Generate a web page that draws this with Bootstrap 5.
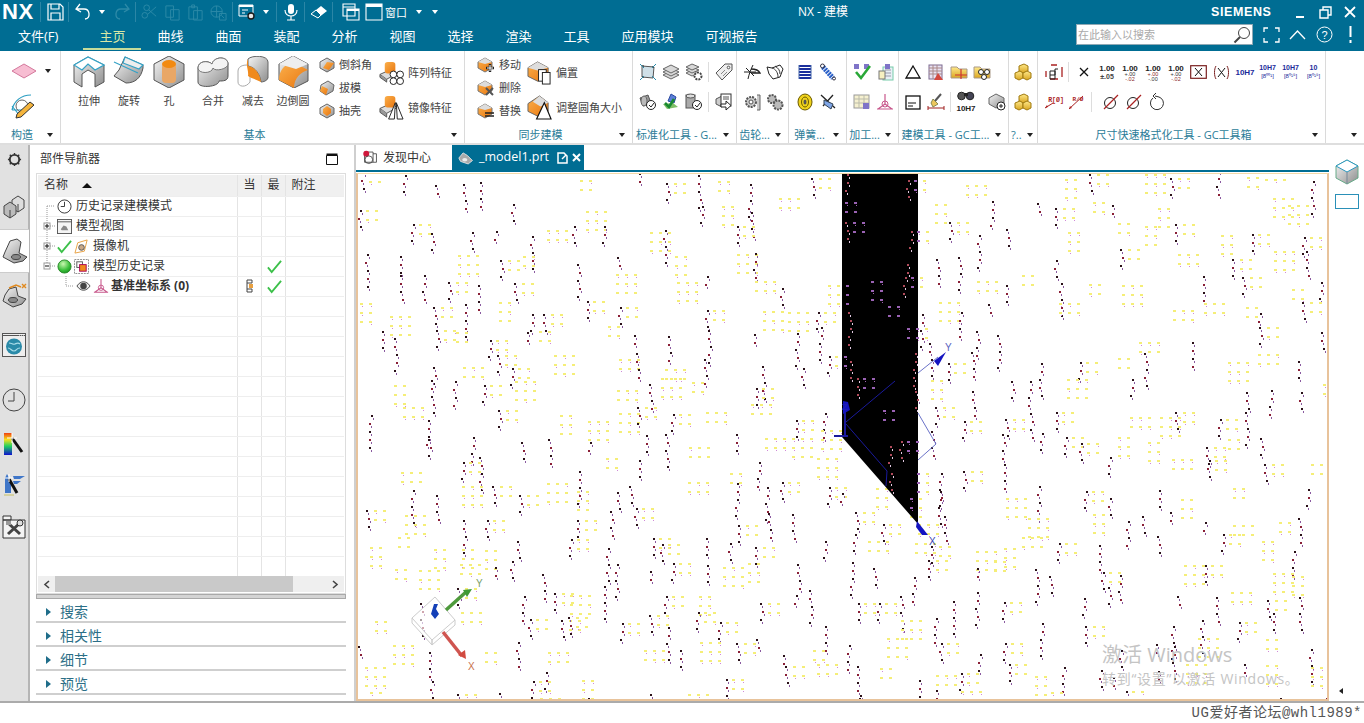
<!DOCTYPE html>
<html lang="zh-CN">
<head>
  <meta charset="UTF-8">
  <meta name="viewport" content="width=device-width, initial-scale=1.0">
  <title>NX - 建模</title>
  <link href="https://cdn.jsdelivr.net/npm/bootstrap@5.3.0/dist/css/bootstrap.min.css" rel="stylesheet">
  <script src="https://cdn.jsdelivr.net/npm/bootstrap@5.3.0/dist/js/bootstrap.bundle.min.js"></script>
  <style>
    html, body { height: 723px; overflow: hidden; }
    body { font-family: "Open Sans", "Noto Sans CJK SC", sans-serif; font-size: 11px; line-height: 1; color: #333; background: #fff; }
    svg { display: block; flex: none; }
    .defs-holder { position: absolute; width: 0; height: 0; }

    /* title + tabs */
    .app-head { background: #006d93; height: 51px; color: #fff; }
    .title-row { height: 24px; }
    .quick-bar { width: 798px; }
    .nx-logo { width: 38px; padding-left: 2px; font: bold 22px "Liberation Sans", sans-serif; letter-spacing: .5px; }
    .qa { width: 23px; height: 22px; }
    .qc { width: 16px; height: 22px; }
    .qs { width: 1px; height: 20px; margin: 0 2px; background: #2b86a6; }
    .qa-gap { margin-left: 4px; }
    .win-label { width: 22px; font-size: 11px; }
    .app-title { font-size: 12px; }
    .siemens { font: bold 12.5px "Liberation Sans", sans-serif; letter-spacing: .6px; margin-left: 363px; }
    .win-btn { width: 25px; height: 20px; }
    .win-first { margin-left: 16px; }
    .tab-row { height: 27px; }
    .rb-tab { padding: 0 16px; font-size: 13px; height: 25px; line-height: 23px; white-space: nowrap; }
    .rb-tab.file-tab { padding: 0 25px 0 18px; }
    .rb-tab.on { color: #d9e8a6; border-bottom: 2px solid #c5dc9a; }
    .find-box { width: 177px; height: 21px; background: #fff; border: 1px solid #8fa9b5; color: #aaa; font-size: 11px; padding: 0 1px 0 1px; margin-top: -6px; }
    .tab-tools { margin-top: -6px; margin-left: 5px; }
    .tool-btn { width: 26.5px; height: 20px; }

    /* ribbon */
    .ribbon { height: 94px; border-bottom: 2px solid #dedede; }
    .rgrp { height: 92px; border-right: 1px solid #dadada; position: relative; }
    .g-a { width: 61px; } .g-b { width: 404px; } .g-c { width: 168px; } .g-d { width: 104px; }
    .g-e { width: 52px; } .g-f { width: 58px; } .g-g { width: 52px; } .g-h { width: 110px; }
    .g-i { width: 29px; } .g-j { width: 288px; } .g-k { width: 38px; border-right: 0; }
    .rbody { height: 75px; }
    .rlabel { height: 17px; color: #2b7c98; font-size: 11px; padding: 0 7px 0 2px; white-space: nowrap; }
    .rlabel b { font-weight: 400; flex: 1; text-align: center; padding-right: 5px; }
    .caret-d { width: 0; height: 0; border: 3.5px solid transparent; border-top: 4px solid #222; border-bottom: 0; flex: none; }
    .caret-w { width: 0; height: 0; border: 3.5px solid transparent; border-top: 4px solid #fff; border-bottom: 0; }
    .plane-row { padding-top: 12px; padding-left: 3px; }
    .sketch-icon { margin: 14px 0 0 9px; }
    .big-item { width: 40px; padding-top: 5px; color: #444; }
    .big-item span { margin-top: 7px; white-space: nowrap; }
    .small-col { padding-top: 2px; }
    .small-col-a { margin-left: 2px; padding-left: 4px; }
    .small-row { height: 23px; gap: 4px; color: #444; white-space: nowrap; }
    .mid-row { height: 35px; gap: 4px; color: #444; white-space: nowrap; }
    .mid-col-a { margin-left: 7px; padding-top: 4px; }
    .mid-col-b { margin-left: 6px; padding-top: 4px; }
    .icon-cell { width: 23px; height: 24px; }
    .icon-sep { width: 1px; height: 20px; background: #ddd; margin: 0 3px; }
    .icon-rows { padding-top: 9px; gap: 6px; }
    .pad-a { padding-left: 5px; } .pad-b { padding-left: 8px; } .pad-c { padding-left: 3px; }
    .pad-d { padding-left: 2px; } .pad-e { padding-left: 4px; } .pad-f { padding-left: 3px; }

    /* work area */
    .work-area { height: 556px; }
    .side-rail { width: 30px; background: #e1e1e1; border-right: 2px solid #b5b5b5; position: relative; }
    .rail-btn { height: 44px; }
    .rail-btn.on { background: #fff; width: 30px; border: 1px solid #ccc; border-right: 0; }
    .rail-a { height: 40px; padding-bottom: 12px; } .rail-b { height: 55px; } .rail-c { height: 33px; }
    .rail-d { height: 50px; } .rail-e { height: 34px; }
    .nav-panel { width: 326px; border-right: 2px solid #cfcfcf; padding: 0 8px 0 6px; }
    .panel-title { height: 28px; font-size: 12px; padding: 0 8px 0 4px; }
    .tree-box { height: 421px; border: 1px solid #ddd; padding: 1px; }
    .tree-table { table-layout: fixed; width: 306px; margin: 0; font-size: 12px; --bs-table-bg: transparent; }
    .tree-table th, .tree-table td { height: 20px; padding: 0 0 0 2px; border: 0; border-bottom: 1px solid #eee; border-right: 1px solid #e4e4e4; font-weight: 400; vertical-align: middle; color: #333; line-height: 1; }
    .tree-table td:first-child { border-right: 1px solid #e4e4e4; }
    .tree-table td:last-child, .tree-table th:last-child { border-right: 0; }
    .tree-table th { background: #f0f0f0; height: 21px; padding-left: 6px; }
    .tree-head-sort { width: 0; height: 0; border: 5px solid transparent; border-bottom: 5px solid #111; border-top: 0; margin-left: 14px; }
    .tree-cell { height: 19px; gap: 2px; white-space: nowrap; }
    .tree-cell span { margin-left: 2px; }
    .tree-scroll-wrap { height: 401px; overflow: hidden; }
    .h-scroll { height: 16px; background: #efefef; }
    .h-end { width: 17px; height: 16px; color: #555; }
    .h-thumb { width: 238px; height: 16px; background: #c9c9c9; }
    .split-bar { height: 5px; background: #d4d4d4; border: 1px solid #a9a9a9; }
    .fold-row { height: 24px; border-bottom: 2px solid #cfcfcf; color: #2c6f87; font-size: 14px; gap: 9px; padding: 3px 0 0 10px; }
    .fold-tri { width: 0; height: 0; border: 4px solid transparent; border-left: 5px solid #1f6d8a; border-right: 0; }

    /* view */
    .view-col { width: 973px; }
    .doc-tabs { height: 25px; }
    .doc-tab { height: 25px; font-size: 12px; gap: 4px; padding-left: 6px; }
    .doc-home { width: 96px; }
    .doc-model { width: 132px; background: #006d93; color: #fff; font-size: 12.5px; }
    .teal-rule { height: 3px; background: #006d93; border-bottom: 1px solid #fff; }
    .scene-wrap { height: 528px; border: 2px solid #e8c39b; border-top: 1px solid #f3d9a8; position: relative; overflow: hidden; }
    .activate { position: absolute; left: 744px; top: 471px; color: #c4c4c4; white-space: nowrap; pointer-events: none; }
    .activate-a { font-size: 20px; }
    .activate-b { font-size: 14px; margin-top: 7px; letter-spacing: .7px; }
    .right-strip { flex: 1; padding: 0 6px 0 6px; position: relative; }
    .strip-cube { margin-top: 14px; }
    .strip-rect { width: 24px; height: 15px; border: 1px solid #2a90b8; margin-top: 9px; }
    .strip-tri { margin: auto 0 7px 4px; width: 0; height: 0; border: 3px solid transparent; border-right: 4px solid #222; border-left: 0; }
    .foot-bar { height: 22px; border-top: 2px solid #ababab; color: #555; font-size: 14px; letter-spacing: .5px; padding-right: 2px; font-family: "Liberation Mono", "Noto Sans CJK SC", monospace; }
  </style>
</head>
<body>
<svg class="defs-holder" xmlns="http://www.w3.org/2000/svg">
  <defs>
    <linearGradient id="gr" x1="0" y1="0" x2="1" y2="1"><stop offset="0" stop-color="#f6f6f6"/><stop offset="1" stop-color="#8d8d8d"/></linearGradient>
    <linearGradient id="or" x1="0" y1="0" x2="1" y2="1"><stop offset="0" stop-color="#fbb04c"/><stop offset="1" stop-color="#e8760f"/></linearGradient>
    <linearGradient id="gy" x1="0" y1="0" x2="0" y2="1"><stop offset="0" stop-color="#ffe98a"/><stop offset="1" stop-color="#d9a520"/></linearGradient>
    <radialGradient id="ball" cx=".4" cy=".3" r=".8"><stop offset="0" stop-color="#c9f7b0"/><stop offset=".6" stop-color="#3cc03c"/><stop offset="1" stop-color="#138a1d"/></radialGradient>
    <linearGradient id="rainbow" x1="0" y1="0" x2="0" y2="1"><stop offset="0" stop-color="#f04010"/><stop offset=".3" stop-color="#f5e020"/><stop offset=".6" stop-color="#20d060"/><stop offset="1" stop-color="#1010d0"/></linearGradient>

    <!-- ribbon, big -->
    <symbol id="i-plane" viewBox="0 0 26 16"><polygon points="1,8 13,1 25,8 13,15" fill="#f7bdd2" stroke="#d4789c"/></symbol>
    <symbol id="i-sketch" viewBox="0 0 26 26"><path d="M3 17 C5 8 12 2 22 2M3 13l8 10M3 17h10" fill="none" stroke="#2b9ec2" stroke-width="1.2"/><circle cx="13" cy="13" r="6" fill="none" stroke="#666"/><polygon points="21,9 25,12 12,24 7,25 8,21" fill="#f4b43c" stroke="#333"/></symbol>
    <symbol id="i-extrude" viewBox="0 0 32 32"><polygon points="1,9 15,1 31,9 31,26 22,31 22,18 15,14 9,18 9,31 1,26" fill="url(#gr)" stroke="#555"/><polygon points="1,9 15,1 31,9 22,14 15,8 9,14" fill="#fff" stroke="#34a2c6" stroke-width="1.2"/></symbol>
    <symbol id="i-revolve" viewBox="0 0 32 32"><path d="M1 20 L13 27 C22 27 28 22 30 12 L30 9 L12 1 L6 14 Z" fill="url(#gr)" stroke="#555"/><path d="M12 1 L30 9 L26 13 L10 7Z M1 6 L25 17" fill="#eee" stroke="#34a2c6" stroke-width="1.2"/></symbol>
    <symbol id="i-hole" viewBox="0 0 32 32"><polygon points="1,8 16,0 31,8 31,24 16,32 1,24" fill="url(#gr)" stroke="#555"/><rect x="9" y="7" width="14" height="20" rx="4" fill="#e9a766"/><ellipse cx="16" cy="8" rx="7" ry="4" fill="#f28a12"/></symbol>
    <symbol id="i-unite" viewBox="0 0 32 32"><path d="M1 12 C1 5 11 4 15 8 C17 0 31 0 31 8 L31 20 C31 25 26 25 22 25 C22 31 1 33 1 26Z" fill="url(#gr)" stroke="#555"/><path d="M1 12 C1 18 15 18 16 12 C18 16 31 13 31 8 C31 0 17 0 15 8 C11 4 1 5 1 12Z" fill="#f4f4f4" stroke="#777"/></symbol>
    <symbol id="i-subtract" viewBox="0 0 32 32"><path d="M1 15 C1 9 10 8 13 10 L13 26 C9 32 1 31 1 26Z" fill="#fff" stroke="#aaa"/><path d="M11 3 C15 -1 31 -1 31 6 L31 22 C30 25 26 26 24 26 C23 18 18 11 11 10Z" fill="url(#gr)" stroke="#666"/><path d="M11 3 L11 10 C18 11 23 18 24 26 C20 24 14 22 11 20 C12 14 8 10 11 3Z" fill="#f08a1c"/></symbol>
    <symbol id="i-blend" viewBox="0 0 32 32"><polygon points="2,8 16,0 31,8 31,25 17,32 2,24" fill="url(#gr)" stroke="#555"/><path d="M2 24 C2 14 8 8 16 6 L31 14 C24 16 17 22 17 32Z" fill="url(#or)"/><polygon points="2,8 16,0 31,8 19,13" fill="#eee"/></symbol>
    <symbol id="i-cham" viewBox="0 0 16 16"><polygon points="1,5 8,1 15,5 15,11 8,15 1,11" fill="url(#gr)" stroke="#666"/><polygon points="4,11 8,5 15,6 10,13" fill="url(#or)"/></symbol>
    <symbol id="i-draft" viewBox="0 0 16 16"><polygon points="2,5 9,1 15,5 14,11 7,15 1,11" fill="url(#gr)" stroke="#666"/><polygon points="1,11 3,6 9,9 7,15" fill="url(#or)"/></symbol>
    <symbol id="i-shell" viewBox="0 0 16 16"><polygon points="1,5 8,1 15,5 15,11 8,15 1,11" fill="url(#gr)" stroke="#666"/><polygon points="4,6 8,3 12,6 12,10 8,13 4,10" fill="url(#or)"/></symbol>
    <symbol id="i-pattern" viewBox="0 0 26 26"><polygon points="1,15 12,10 19,14 8,20" fill="#ddd" stroke="#555"/><path d="M1 15v3l7 5v-3" fill="#999" stroke="#555"/><rect x="6" y="2" width="11" height="12" rx="3" fill="url(#or)"/><g fill="#fff" stroke="#222"><circle cx="15" cy="15" r="3.5"/><circle cx="22" cy="15" r="3.5"/><circle cx="15" cy="22" r="3.5"/><circle cx="22" cy="22" r="3.5"/></g></symbol>
    <symbol id="i-mirror" viewBox="0 0 26 26"><polygon points="1,14 12,9 19,13 8,19" fill="#ddd" stroke="#555"/><path d="M1 14v4l7 5v-4" fill="#999" stroke="#555"/><rect x="6" y="1" width="11" height="12" rx="3" fill="url(#or)"/><path d="M17 8 L10 25 H16ZM18 8 L25 25 H19Z" fill="#fff" stroke="#222"/></symbol>
    <symbol id="i-move" viewBox="0 0 18 18"><polygon points="1,6 8,2 15,6 15,12 8,16 1,12" fill="url(#or)" stroke="#777"/><polygon points="1,6 8,2 15,6 8,8" fill="#ddd"/><path d="M13 8v8M9 12h8" stroke="#222" stroke-width="2.4"/><path d="M13 9v6M10 12h6" stroke="#fff"/></symbol>
    <symbol id="i-del" viewBox="0 0 18 18"><polygon points="1,6 8,2 15,6 15,12 8,16 1,12" fill="url(#or)" stroke="#777"/><polygon points="1,6 8,2 15,6 8,8" fill="#ddd"/><path d="M9 9l7 7M16 9l-7 7" stroke="#555" stroke-width="2"/></symbol>
    <symbol id="i-swap" viewBox="0 0 18 18"><polygon points="1,6 8,2 15,6 15,12 8,16 1,12" fill="url(#or)" stroke="#777"/><polygon points="1,6 8,2 15,6 8,8" fill="#ddd"/><path d="M8 11h9M8 14h9" stroke="#222" stroke-width="1.4"/></symbol>
    <symbol id="i-offset" viewBox="0 0 26 26"><polygon points="1,8 11,2 22,8 22,17 11,22 1,17" fill="url(#or)" stroke="#666"/><polygon points="1,8 11,2 22,8 11,11" fill="#ddd"/><rect x="12" y="10" width="8" height="12" fill="#fff" stroke="#222"/><rect x="16" y="13" width="8" height="12" fill="#fff" stroke="#222"/></symbol>
    <symbol id="i-resize" viewBox="0 0 26 26"><polygon points="1,9 13,1 22,8 22,17 11,22 1,17" fill="url(#or)" stroke="#666"/><polygon points="6,7 13,1 22,8 14,12" fill="#ddd"/><path d="M18 8 L10 25 H25Z" fill="#fff" stroke="#111" stroke-width="1.2"/></symbol>

    <!-- ribbon, tool cells -->
    <symbol id="t-surf" viewBox="0 0 18 18"><path d="M3 3 L15 4 L14 15 L3 14Z" fill="#cfe0e8" stroke="#555"/><path d="M3 3h2M13 4h2M3 14h2" stroke="#222"/><path d="M1 1l4 4M17 1l-4 4M1 17l4-4M17 17l-4-4" stroke="#2b8aa8"/></symbol>
    <symbol id="t-layers" viewBox="0 0 18 18"><g fill="#d8d8d8" stroke="#666"><polygon points="1,12 9,8 17,12 9,16"/><polygon points="1,9 9,5 17,9 9,13"/><polygon points="1,6 9,2 17,6 9,10"/></g></symbol>
    <symbol id="t-layer2" viewBox="0 0 18 18"><g fill="#d8d8d8" stroke="#666"><polygon points="1,10 7,7 14,10 7,13"/><polygon points="1,7 7,4 14,7 7,10"/><polygon points="1,4 7,1 14,4 7,7"/></g><circle cx="13" cy="13" r="3.5" fill="#fff" stroke="#444" stroke-width="2" stroke-dasharray="2 1"/></symbol>
    <symbol id="t-tag" viewBox="0 0 18 18"><path d="M10 1 L17 1 L17 7 L7 17 L1 10Z" fill="#eee" stroke="#555"/><circle cx="13.5" cy="4.5" r="1.3" fill="#fff" stroke="#555"/><path d="M6 11l4-4M8 13l4-4" stroke="#888"/></symbol>
    <symbol id="t-check1" viewBox="0 0 18 18"><path d="M1 5 L9 2 L12 10 L4 13Z" fill="#999" stroke="#555"/><ellipse cx="5" cy="8" rx="3" ry="5" fill="#bbb" stroke="#666"/><circle cx="12" cy="12" r="4.5" fill="#fff" stroke="#222"/><path d="M10 12l2 2 3-4" fill="none" stroke="#222"/></symbol>
    <symbol id="t-check2" viewBox="0 0 18 18"><path d="M9 1l5 3-2 6-6-2z" fill="#5a7ed8" stroke="#2c4aa0"/><path d="M1 11l4 5 11-2-5-4z" fill="#7fbe68"/><path d="M3 10l4 4 5-8" fill="none" stroke="#1a8a30" stroke-width="2.6"/></symbol>
    <symbol id="t-check3" viewBox="0 0 18 18"><rect x="1" y="2" width="9" height="13" fill="#aaa" stroke="#555"/><ellipse cx="5.5" cy="3" rx="4.500" ry="2" fill="#ddd" stroke="#555"/><circle cx="12" cy="12" r="4.5" fill="#fff" stroke="#222"/><path d="M10 12l2 2 3-4" fill="none" stroke="#222"/></symbol>
    <symbol id="t-export" viewBox="0 0 18 18"><polygon points="1,6 7,3 7,14 1,11" fill="#ccc" stroke="#555"/><rect x="6" y="1" width="10" height="12" fill="#fff" stroke="#333"/><path d="M8 4h6M8 6h6" stroke="#555"/><path d="M6 11h5V8l5 4.500-5 4.500v-3H6z" fill="#fff" stroke="#222"/></symbol>
    <symbol id="t-gear1" viewBox="0 0 18 18"><path d="M1 9h12M3 5l8 8M10 2 C8 6 6 11 5 16" stroke="#222" fill="none"/><path d="M8 6c3 0 7 0 9 4l-9 0" fill="none" stroke="#222" stroke-width="1.4"/></symbol>
    <symbol id="t-gear2" viewBox="0 0 18 18"><path d="M1 4l5 1 8-3 3 4-3 8-7 2-4-5z" fill="#fff" stroke="#222"/><path d="M6 5c4 1 6 5 6 9M9 3c3 2 5 4 5 8" fill="none" stroke="#333"/></symbol>
    <symbol id="t-gear3" viewBox="0 0 18 18"><circle cx="8" cy="9" r="5" fill="#ccc" stroke="#555" stroke-width="2" stroke-dasharray="2 1"/><circle cx="8" cy="9" r="2" fill="#fff" stroke="#555"/><path d="M14 2h3v15h-3" fill="#ccc" stroke="#666"/></symbol>
    <symbol id="t-gear4" viewBox="0 0 18 18"><circle cx="6" cy="6" r="4" fill="#bbb" stroke="#555" stroke-width="2" stroke-dasharray="2 1"/><circle cx="12" cy="12" r="4.500" fill="#bbb" stroke="#555" stroke-width="2" stroke-dasharray="2 1"/></symbol>
    <symbol id="t-spring1" viewBox="0 0 18 18"><g stroke="#1c2f9c" stroke-width="1.8"><path d="M3 3h12M3 6h12M3 9h12M3 12h12M3 15h12"/></g><path d="M3 2v14M15 2v14" stroke="#46a" /></symbol>
    <symbol id="t-spring2" viewBox="0 0 18 18"><path d="M4 4 L14 15" stroke="#2a60c8" stroke-width="5" stroke-dasharray="2 .8"/><circle cx="3.500" cy="3" r="2" fill="none" stroke="#334"/><circle cx="15" cy="15.500" r="1.500" fill="none" stroke="#334"/></symbol>
    <symbol id="t-spring3" viewBox="0 0 18 18"><ellipse cx="9" cy="9" rx="7" ry="8" fill="#efd21c" stroke="#6b5a00"/><ellipse cx="9" cy="9" rx="3.500" ry="5" fill="none" stroke="#6b5a00"/><ellipse cx="9" cy="9" rx="1.500" ry="2.500" fill="#555"/></symbol>
    <symbol id="t-spring4" viewBox="0 0 18 18"><path d="M2 2 L16 15M14 2 L4 13" stroke="#222" stroke-width="1.300"/><path d="M5 7l9 4-2 5-7-5z" fill="#7fa6e8" stroke="#345"/></symbol>
    <symbol id="t-mach1" viewBox="0 0 18 18"><rect x="1" y="1" width="5" height="5" fill="#7f74c8"/><rect x="11" y="1" width="5" height="5" fill="#7f74c8"/><path d="M3 9l5 6 9-12" fill="none" stroke="#2aa838" stroke-width="2.6"/></symbol>
    <symbol id="t-mach2" viewBox="0 0 18 18"><rect x="7" y="4" width="10" height="13" fill="#e8eff5" stroke="#7ca"/><path d="M9 7h6M9 10h6M9 13h6" stroke="#99a"/><rect x="3" y="8" width="6" height="8" fill="#f6f0c0" stroke="#777"/><rect x="9" y="1" width="5" height="5" fill="#7f74c8"/></symbol>
    <symbol id="t-mach3" viewBox="0 0 18 18"><rect x="1" y="2" width="15" height="13" fill="#f5f0cf" stroke="#999"/><path d="M1 6h15M1 10h15M6 2v13M11 2v13" stroke="#bba"/><rect x="10" y="10" width="6" height="6" fill="#7f74c8"/></symbol>
    <symbol id="t-datum" viewBox="0 0 18 18"><circle cx="9" cy="11" r="3" fill="none" stroke="#c8588c"/><path d="M9 1v10M9 11L2 16M9 11l7 5M1 16h16" fill="none" stroke="#c8588c" stroke-width="1.200"/></symbol>
    <symbol id="t-tri" viewBox="0 0 18 18"><path d="M9 3 L16 15 H2Z" fill="#fff" stroke="#111" stroke-width="1.300"/></symbol>
    <symbol id="t-sheet" viewBox="0 0 18 18"><rect x="2" y="3" width="14" height="13" fill="#fff" stroke="#111" stroke-width="1.300"/><path d="M4 10h8M4 13h5" stroke="#111"/></symbol>
    <symbol id="t-table" viewBox="0 0 18 18"><rect x="2" y="2" width="13" height="14" fill="#e8e2f2" stroke="#7d6a90"/><path d="M2 5h13M2 8h13M2 11h13M6 2v14M10 2v14" stroke="#a88"/><path d="M11 10l5 7H7z" fill="#d4483e"/></symbol>
    <symbol id="t-broom" viewBox="0 0 18 18"><path d="M14 1L8 8" stroke="#555" stroke-width="2"/><path d="M6 6l5 5-5 3-2-4z" fill="#edc65c" stroke="#885"/><path d="M1 13v4M17 13v4M1 15h16" stroke="#a02020"/></symbol>
    <symbol id="t-f1" viewBox="0 0 18 18"><path d="M1 4h6l2 2h8v9H1z" fill="url(#gy)" stroke="#a98"/><path d="M5 12h12M11 6v10" stroke="#c33" stroke-width="1.200"/></symbol>
    <symbol id="t-f2" viewBox="0 0 18 18"><path d="M1 4h6l2 2h8v9H1z" fill="url(#gy)" stroke="#a98"/><circle cx="8" cy="9" r="2.500" fill="#fff" stroke="#222"/><circle cx="14" cy="9" r="2.500" fill="#fff" stroke="#222"/><circle cx="11" cy="14" r="2.500" fill="#fff" stroke="#222"/></symbol>
    <symbol id="t-binoc" viewBox="0 0 18 10"><circle cx="4.500" cy="5" r="3.800" fill="#555" stroke="#222"/><circle cx="13" cy="5" r="3.800" fill="#445" stroke="#222"/><rect x="7" y="2" width="4" height="3" fill="#222"/></symbol>
    <symbol id="t-boxp" viewBox="0 0 18 18"><polygon points="1,5 8,1 16,5 16,11 8,15 1,11" fill="url(#gr)" stroke="#666"/><circle cx="13" cy="13" r="4" fill="#fff" stroke="#222"/><path d="M13 11v4M11 13h4" stroke="#222"/></symbol>
    <symbol id="t-gold" viewBox="0 0 18 18"><g fill="url(#gy)" stroke="#a07a10"><polygon points="5,3 10,1 14,3 14,8 9,10 5,8"/><polygon points="1,10 6,8 9,10 9,15 5,17 1,15"/><polygon points="9,10 13,8 17,10 17,15 13,17 9,15"/></g></symbol>
    <symbol id="t-step" viewBox="0 0 18 18"><path d="M5 12h5V6h3" fill="none" stroke="#222"/><path d="M1 8v6M17 4v10M5 16h8M6 2h6" stroke="#a22" stroke-width="1.300"/><path d="M5 8h5v8H5z" fill="none" stroke="#222"/></symbol>
    <symbol id="t-dia1" viewBox="0 0 18 18"><circle cx="8" cy="10" r="5.500" fill="none" stroke="#222"/><path d="M2 16L16 2" stroke="#a22" stroke-width="1.300"/></symbol>
    <symbol id="t-rot" viewBox="0 0 18 18"><path d="M5 5 A6.500 6.500 0 1 0 11 4 L7 3M8 0L5 3 8 6" fill="none" stroke="#333"/></symbol>
    <symbol id="t-lead1" viewBox="0 0 18 18"><path d="M1 15L9 10" stroke="#a22"/><path d="M1 15l3-1-1-2z" fill="#a22"/></symbol>
    <symbol id="t-lead2" viewBox="0 0 18 18"><path d="M2 16L16 3" stroke="#a22"/><path d="M2 16l3-1-2-2z" fill="#a22"/></symbol>

    <!-- quick bar -->
    <symbol id="q-save" viewBox="0 0 18 18"><path d="M2 1h12l3 3v13H2z M5 1v5h8V1 M5 17v-7h9v7" fill="none" stroke="#fff" stroke-width="1.200"/></symbol>
    <symbol id="q-undo" viewBox="0 0 18 18"><path d="M6 1L2 6l5 3M2 6h8c6 0 7 9 1 10" fill="none" stroke="#fff" stroke-width="1.300"/></symbol>
    <symbol id="q-redo" viewBox="0 0 18 18"><path d="M12 1l4 5-5 3M16 6H8c-6 0-7 9-1 10" fill="none" stroke="#2d8aa8" stroke-width="1.300"/></symbol>
    <symbol id="q-cut" viewBox="0 0 18 18"><g fill="none" stroke="#2d8aa8"><circle cx="4" cy="12" r="3"/><circle cx="6" cy="4" r="3"/><path d="M7 11L16 3M8 6l8 7"/></g></symbol>
    <symbol id="q-copy" viewBox="0 0 18 18"><g fill="none" stroke="#2d8aa8"><path d="M2 2h8v12H2zM7 6h9v11H7z"/></g></symbol>
    <symbol id="q-paste" viewBox="0 0 18 18"><g fill="none" stroke="#2d8aa8"><path d="M2 3h9v13H2zM5 1h3v3H5zM7 7h9v10H7z"/></g></symbol>
    <symbol id="q-glob" viewBox="0 0 18 18"><g fill="none" stroke="#2d8aa8"><circle cx="7" cy="8" r="6"/><path d="M1 8h12M7 2v12M10 10h7v7h-7zM12 12l3 3"/></g></symbol>
    <symbol id="q-winset" viewBox="0 0 18 18"><path d="M1 2h14v11H1z" fill="none" stroke="#fff"/><path d="M1 2h14v2H1z" fill="#fff"/><path d="M4 7h6M4 10h3" stroke="#fff"/><circle cx="13" cy="13" r="3" fill="#e8e8e8" stroke="#1a1a1a" stroke-width="1.400"/></symbol>
    <symbol id="q-mic" viewBox="0 0 18 18"><rect x="6" y="1" width="6" height="10" rx="3" fill="#fff"/><path d="M3 7c0 8 12 8 12 0M9 13v4M5 17h8" fill="none" stroke="#fff" stroke-width="1.200"/></symbol>
    <symbol id="q-erase" viewBox="0 0 18 18"><polygon points="1,11 11,3 17,8 8,15" fill="#fff"/><polygon points="1,11 6,7 11,12 8,15" fill="#006d93" stroke="#fff"/></symbol>
    <symbol id="q-win1" viewBox="0 0 18 18"><path d="M1 1h12v3H1zM1 4h12v9H1zM5 6h12v11H5z" fill="#006d93" stroke="#fff" stroke-width="1.100"/><path d="M5 6h12v2H5z" fill="#fff"/></symbol>
    <symbol id="q-win2" viewBox="0 0 18 18"><path d="M1 1h16v16H1z" fill="none" stroke="#fff" stroke-width="1.100"/><path d="M1 1h16v3H1z" fill="#fff"/></symbol>
    <symbol id="q-mag" viewBox="0 0 18 18"><circle cx="11" cy="7" r="5.500" fill="#fff" stroke="#444"/><path d="M7 11L1.500 16.500" stroke="#444" stroke-width="2"/></symbol>

    <!-- rail + tree -->
    <symbol id="r-gear" viewBox="0 0 16 16"><circle cx="8" cy="8" r="5" fill="none" stroke="#333" stroke-width="2"/><path d="M8 1v2M8 13v2M1 8h2M13 8h2M3 3l1.500 1.500M13 3l-1.500 1.500M3 13l1.500-1.500M13 13l-1.500-1.500" stroke="#333" stroke-width="1.500"/></symbol>
    <symbol id="r-blocks" viewBox="0 0 22 24"><polygon points="9,5 15,1 21,5 21,13 15,17 9,13" fill="#ddd" stroke="#444"/><polygon points="1,11 7,7 13,11 13,19 7,23 1,19" fill="#bbb" stroke="#444"/><path d="M15 9v8M7 15v8" stroke="#444"/></symbol>
    <symbol id="r-bracket" viewBox="0 0 26 26"><path d="M8 3l7-2 4 3-2 11 8 4-4 4-9 2-11-6 2-5z" fill="url(#gr)" stroke="#444"/><ellipse cx="14" cy="19" rx="4.500" ry="2.500" fill="#888" stroke="#444"/></symbol>
    <symbol id="r-bracket2" viewBox="0 0 26 26"><path d="M8 7l7-2 2 9 8 3-4 5-9 3-10-6 2-6z" fill="url(#gr)" stroke="#444"/><ellipse cx="12" cy="18" rx="4.500" ry="2.500" fill="#888" stroke="#444"/><path d="M8 6l7-3 5 2M21 2l4 4M25 2l-4 4" fill="none" stroke="#e08a20" stroke-width="1.400"/></symbol>
    <symbol id="r-globe" viewBox="0 0 24 24"><rect x=".5" y=".5" width="23" height="23" fill="#eee" stroke="#555"/><path d="M1 2.500h22" stroke="#555"/><path d="M17 2h1M19 2h1M21 2h1" stroke="#fff"/><circle cx="12" cy="13.500" r="8" fill="#2a8aa8"/><path d="M7 10c3 0 4 2 6 1s3-2 5 0M6 15c3 0 3 3 6 3s2-3 6-3" fill="none" stroke="#a8dce8" stroke-width="1.200"/></symbol>
    <symbol id="r-clock" viewBox="0 0 24 24"><circle cx="12" cy="12" r="11" fill="none" stroke="#444"/><path d="M12 4v9H6" fill="none" stroke="#444"/></symbol>
    <symbol id="r-color" viewBox="0 0 22 24"><rect x="1" y="1" width="8" height="22" fill="url(#rainbow)"/><path d="M9 6l10 14" stroke="#111" stroke-width="3"/><path d="M9 1v10M4 6h10" stroke="#fff"/></symbol>
    <symbol id="r-mill" viewBox="0 0 24 24"><path d="M3 20V5l2-4 4 7v12zM11 3h12l-5 3h-6zM11 8h8l-4 3h-3z" fill="#3f76c8"/><path d="M2 22h10" stroke="#c8c060"/><path d="M7 6l8 14" stroke="#111" stroke-width="3"/><path d="M7 1v8M3 5h8" stroke="#fff"/></symbol>
    <symbol id="r-tools" viewBox="0 0 24 24"><path d="M1 5h8V1H1v4h22v18H1z" fill="#f4f4f4" stroke="#333"/><path d="M6 19L18 8M18 19L6 8" stroke="#444" stroke-width="3"/><circle cx="18" cy="8" r="3" fill="#ddd" stroke="#333"/><rect x="4" y="6" width="5" height="4" fill="#999"/></symbol>
    <symbol id="n-clock" viewBox="0 0 16 16"><circle cx="8" cy="8" r="7" fill="#fff" stroke="#333"/><path d="M8 3v5H4" fill="none" stroke="#333"/></symbol>
    <symbol id="n-view" viewBox="0 0 16 16"><rect x=".5" y=".5" width="15" height="15" fill="#f4f4f4" stroke="#555"/><path d="M.5 3h15" stroke="#555"/><path d="M4 11l3-4 3 1 2 4H5z" fill="#888"/></symbol>
    <symbol id="n-check" viewBox="0 0 16 16"><path d="M1 9l4 5L15 2" fill="none" stroke="#3cc04a" stroke-width="2"/></symbol>
    <symbol id="n-cam" viewBox="0 0 16 16"><path d="M4 4l10-3-3 12-10 2z" fill="none" stroke="#e8a040"/><circle cx="8" cy="9" r="3" fill="#c8a888" stroke="#555"/></symbol>
    <symbol id="n-ball" viewBox="0 0 16 16"><circle cx="8" cy="8" r="7" fill="url(#ball)" stroke="#2a8a2a"/></symbol>
    <symbol id="n-group" viewBox="0 0 16 16"><rect x=".5" y=".5" width="15" height="15" fill="#fff" stroke="#888" stroke-dasharray="2 1"/><rect x="3" y="3" width="6" height="6" fill="#fff" stroke="#555"/><rect x="6" y="6" width="7" height="7" fill="#f08a1c" stroke="#a05"/></symbol>
    <symbol id="n-eye" viewBox="0 0 16 12"><path d="M1 6c4-6 10-6 14 0c-4 6-10 6-14 0z" fill="#eee" stroke="#444"/><circle cx="8" cy="6" r="3.500" fill="#444"/></symbol>
    <symbol id="n-dep" viewBox="0 0 8 14"><path d="M1 1h5v3H1zM1 10h5v3H1zM1 4v6" fill="none" stroke="#444"/><rect x="3" y="5" width="4" height="4" fill="#e8a040"/></symbol>
    <symbol id="d-find" viewBox="0 0 20 18"><path d="M3 2h10v12H3z" fill="#fff" stroke="#444"/><circle cx="5" cy="4" r="3.500" fill="#d0183c"/><circle cx="8" cy="11" r="4.500" fill="none" stroke="#444"/><path d="M13 4h4v10h-4" fill="none" stroke="#444"/></symbol>
    <symbol id="d-part" viewBox="0 0 20 18"><path d="M6 3l5 3 6 6-5 4-9-3-2-4z" fill="#aaa" stroke="#e8e8e8"/><ellipse cx="8" cy="11" rx="3" ry="2" fill="#eee"/></symbol>
    <symbol id="s-cube" viewBox="0 0 24 26"><polygon points="1,7 12,1 23,7 23,19 12,25 1,19" fill="url(#gr)" stroke="#6a8"/><polygon points="1,7 12,1 23,7 12,13" fill="#fff" stroke="#2a98c0"/><path d="M12 13v12" stroke="#789"/></symbol>
  </defs>
</svg>

<header class="app-head">
  <div class="title-row d-flex align-items-center">
    <div class="quick-bar d-flex align-items-center">
      <span class="nx-logo">NX</span><span class="qs"></span>
      <span class="qa d-flex align-items-center justify-content-center"><svg width="18" height="18"><use href="#q-save"/></svg></span><span class="qs"></span>
      <span class="qa d-flex align-items-center justify-content-center"><svg width="18" height="18"><use href="#q-undo"/></svg></span>
      <span class="qc d-flex align-items-center justify-content-center"><i class="caret-w"></i></span>
      <span class="qa d-flex align-items-center justify-content-center"><svg width="18" height="18"><use href="#q-redo"/></svg></span><span class="qs"></span>
      <span class="qa d-flex align-items-center justify-content-center"><svg width="17" height="17"><use href="#q-cut"/></svg></span>
      <span class="qa d-flex align-items-center justify-content-center"><svg width="17" height="17"><use href="#q-copy"/></svg></span>
      <span class="qa d-flex align-items-center justify-content-center"><svg width="17" height="17"><use href="#q-paste"/></svg></span>
      <span class="qa d-flex align-items-center justify-content-center"><svg width="17" height="17"><use href="#q-glob"/></svg></span><span class="qs"></span>
      <span class="qa d-flex align-items-center justify-content-center"><svg width="18" height="18"><use href="#q-winset"/></svg></span>
      <span class="qc d-flex align-items-center justify-content-center"><i class="caret-w"></i></span><span class="qs"></span>
      <span class="qa d-flex align-items-center justify-content-center"><svg width="18" height="18"><use href="#q-mic"/></svg></span><span class="qs"></span>
      <span class="qa d-flex align-items-center justify-content-center"><svg width="18" height="18"><use href="#q-erase"/></svg></span><span class="qs"></span>
      <span class="qa qa-gap d-flex align-items-center justify-content-center"><svg width="18" height="18"><use href="#q-win1"/></svg></span>
      <span class="qa d-flex align-items-center justify-content-center"><svg width="18" height="18"><use href="#q-win2"/></svg></span>
      <span class="win-label">窗口</span>
      <span class="qc ms-1 d-flex align-items-center justify-content-center"><i class="caret-w"></i></span>
      <span class="qc d-flex align-items-center justify-content-center"><i class="caret-w"></i></span>
    </div>
    <span class="app-title">NX - 建模</span>
    <span class="siemens">SIEMENS</span>
    <span class="win-btn win-first d-flex align-items-center justify-content-center"><svg width="12" height="12" viewBox="0 0 12 12"><path d="M2 11h8" stroke="#fff" stroke-width="2"/></svg></span>
    <span class="win-btn d-flex align-items-center justify-content-center"><svg width="13" height="13" viewBox="0 0 13 13"><path d="M1 4h8v8H1zM4 4V1h8v8H9" fill="none" stroke="#fff" stroke-width="1.400"/></svg></span>
    <span class="win-btn d-flex align-items-center justify-content-center"><svg width="12" height="12" viewBox="0 0 12 12"><path d="M1 1l10 10M11 1L1 11" stroke="#fff" stroke-width="1.800"/></svg></span>
  </div>
  <div class="tab-row d-flex align-items-center">
    <span class="rb-tab file-tab">文件(F)</span>
    <span class="rb-tab on">主页</span>
    <span class="rb-tab">曲线</span>
    <span class="rb-tab">曲面</span>
    <span class="rb-tab">装配</span>
    <span class="rb-tab">分析</span>
    <span class="rb-tab">视图</span>
    <span class="rb-tab">选择</span>
    <span class="rb-tab">渲染</span>
    <span class="rb-tab">工具</span>
    <span class="rb-tab">应用模块</span>
    <span class="rb-tab">可视报告</span>
    <div class="find-box d-flex align-items-center justify-content-between ms-auto"><span>在此输入以搜索</span><svg width="18" height="18"><use href="#q-mag"/></svg></div>
    <div class="tab-tools d-flex align-items-center">
      <span class="tool-btn d-flex align-items-center justify-content-center"><svg width="17" height="16" viewBox="0 0 17 16"><path d="M1 5V1h4M12 1h4v4M16 11v4h-4M5 15H1v-4" fill="none" stroke="#fff" stroke-width="1.300"/></svg></span>
      <span class="tool-btn d-flex align-items-center justify-content-center"><svg width="17" height="10" viewBox="0 0 17 10"><path d="M1 9l7.500-8L16 9" fill="none" stroke="#fff" stroke-width="1.300"/></svg></span>
      <span class="tool-btn d-flex align-items-center justify-content-center"><svg width="17" height="17" viewBox="0 0 17 17"><circle cx="8.500" cy="8.500" r="7.500" fill="none" stroke="#fff"/><text x="8.500" y="12.500" text-anchor="middle" fill="#fff" font-size="11" font-family="Liberation Sans">?</text></svg></span>
      <span class="tool-btn d-flex align-items-center justify-content-center"><svg width="5" height="17" viewBox="0 0 5 17"><path d="M2.500 0v11M2.500 14v3" stroke="#fff" stroke-width="2"/></svg></span>
    </div>
  </div>
</header>

<section class="ribbon d-flex">
  <div class="rgrp g-a d-flex flex-column">
    <div class="rbody">
      <div class="plane-row d-flex align-items-center">
        <svg class="ms-2" width="26" height="16"><use href="#i-plane"/></svg><i class="caret-d ms-2"></i>
      </div>
      <svg class="sketch-icon" width="26" height="26"><use href="#i-sketch"/></svg>
    </div>
    <div class="rlabel d-flex align-items-center"><b>构造</b><i class="caret-d"></i></div>
  </div>

  <div class="rgrp g-b d-flex flex-column">
    <div class="rbody d-flex pad-b">
      <div class="big-item d-flex flex-column align-items-center"><svg width="32" height="32"><use href="#i-extrude"/></svg><span>拉伸</span></div>
      <div class="big-item d-flex flex-column align-items-center"><svg width="32" height="32"><use href="#i-revolve"/></svg><span>旋转</span></div>
      <div class="big-item d-flex flex-column align-items-center"><svg width="32" height="32"><use href="#i-hole"/></svg><span>孔</span></div>
      <div class="big-item ms-1 d-flex flex-column align-items-center"><svg width="32" height="32"><use href="#i-unite"/></svg><span>合并</span></div>
      <div class="big-item d-flex flex-column align-items-center"><svg width="32" height="32"><use href="#i-subtract"/></svg><span>减去</span></div>
      <div class="big-item d-flex flex-column align-items-center"><svg width="32" height="32"><use href="#i-blend"/></svg><span>边倒圆</span></div>
      <div class="small-col small-col-a d-flex flex-column">
        <div class="small-row d-flex align-items-center"><svg width="16" height="16"><use href="#i-cham"/></svg><span>倒斜角</span></div>
        <div class="small-row d-flex align-items-center"><svg width="16" height="16"><use href="#i-draft"/></svg><span>拔模</span></div>
        <div class="small-row d-flex align-items-center"><svg width="16" height="16"><use href="#i-shell"/></svg><span>抽壳</span></div>
      </div>
      <div class="mid-col-a d-flex flex-column">
        <div class="mid-row d-flex align-items-center"><svg width="25" height="25"><use href="#i-pattern"/></svg><span>阵列特征</span></div>
        <div class="mid-row d-flex align-items-center"><svg width="25" height="25"><use href="#i-mirror"/></svg><span>镜像特征</span></div>
      </div>
    </div>
    <div class="rlabel d-flex align-items-center"><b>基本</b><i class="caret-d"></i></div>
  </div>

  <div class="rgrp g-c d-flex flex-column">
    <div class="rbody d-flex pad-b">
      <div class="small-col d-flex flex-column ms-1">
        <div class="small-row d-flex align-items-center"><svg width="18" height="18"><use href="#i-move"/></svg><span>移动</span></div>
        <div class="small-row d-flex align-items-center"><svg width="18" height="18"><use href="#i-del"/></svg><span>删除</span></div>
        <div class="small-row d-flex align-items-center"><svg width="18" height="18"><use href="#i-swap"/></svg><span>替换</span></div>
      </div>
      <div class="mid-col-b d-flex flex-column">
        <div class="mid-row d-flex align-items-center"><svg width="25" height="25"><use href="#i-offset"/></svg><span>偏置</span></div>
        <div class="mid-row d-flex align-items-center"><svg width="25" height="25"><use href="#i-resize"/></svg><span>调整圆角大小</span></div>
      </div>
    </div>
    <div class="rlabel d-flex align-items-center"><b>同步建模</b><i class="caret-d"></i></div>
  </div>

  <div class="rgrp g-d d-flex flex-column">
    <div class="rbody d-flex flex-column icon-rows pad-c">
      <div class="d-flex align-items-center">
        <span class="icon-cell d-flex align-items-center justify-content-center"><svg width="18" height="18"><use href="#t-surf"/></svg></span>
        <span class="icon-cell d-flex align-items-center justify-content-center"><svg width="18" height="18"><use href="#t-layers"/></svg></span>
        <span class="icon-cell d-flex align-items-center justify-content-center"><svg width="18" height="18"><use href="#t-layer2"/></svg></span>
        <span class="icon-sep"></span>
        <span class="icon-cell d-flex align-items-center justify-content-center"><svg width="18" height="18"><use href="#t-tag"/></svg></span>
      </div>
      <div class="d-flex align-items-center">
        <span class="icon-cell d-flex align-items-center justify-content-center"><svg width="18" height="18"><use href="#t-check1"/></svg></span>
        <span class="icon-cell d-flex align-items-center justify-content-center"><svg width="18" height="18"><use href="#t-check2"/></svg></span>
        <span class="icon-cell d-flex align-items-center justify-content-center"><svg width="18" height="18"><use href="#t-check3"/></svg></span>
        <span class="icon-sep"></span>
        <span class="icon-cell d-flex align-items-center justify-content-center"><svg width="18" height="18"><use href="#t-export"/></svg></span>
      </div>
    </div>
    <div class="rlabel d-flex align-items-center"><b>标准化工具 - G...</b><i class="caret-d"></i></div>
  </div>

  <div class="rgrp g-e d-flex flex-column">
    <div class="rbody d-flex flex-column icon-rows pad-c">
      <div class="d-flex align-items-center">
        <span class="icon-cell d-flex align-items-center justify-content-center"><svg width="18" height="18"><use href="#t-gear1"/></svg></span>
        <span class="icon-cell d-flex align-items-center justify-content-center"><svg width="18" height="18"><use href="#t-gear2"/></svg></span>
      </div>
      <div class="d-flex align-items-center">
        <span class="icon-cell d-flex align-items-center justify-content-center"><svg width="18" height="18"><use href="#t-gear3"/></svg></span>
        <span class="icon-cell d-flex align-items-center justify-content-center"><svg width="18" height="18"><use href="#t-gear4"/></svg></span>
      </div>
    </div>
    <div class="rlabel d-flex align-items-center"><b>齿轮...</b><i class="caret-d"></i></div>
  </div>

  <div class="rgrp g-f d-flex flex-column">
    <div class="rbody d-flex flex-column icon-rows pad-e">
      <div class="d-flex align-items-center">
        <span class="icon-cell d-flex align-items-center justify-content-center"><svg width="18" height="18"><use href="#t-spring1"/></svg></span>
        <span class="icon-cell d-flex align-items-center justify-content-center"><svg width="18" height="18"><use href="#t-spring2"/></svg></span>
      </div>
      <div class="d-flex align-items-center">
        <span class="icon-cell d-flex align-items-center justify-content-center"><svg width="18" height="18"><use href="#t-spring3"/></svg></span>
        <span class="icon-cell d-flex align-items-center justify-content-center"><svg width="18" height="18"><use href="#t-spring4"/></svg></span>
      </div>
    </div>
    <div class="rlabel d-flex align-items-center"><b>弹簧...</b><i class="caret-d"></i></div>
  </div>

  <div class="rgrp g-g d-flex flex-column">
    <div class="rbody d-flex flex-column icon-rows pad-f">
      <div class="d-flex align-items-center">
        <span class="icon-cell d-flex align-items-center justify-content-center"><svg width="18" height="18"><use href="#t-mach1"/></svg></span>
        <span class="icon-cell d-flex align-items-center justify-content-center"><svg width="18" height="18"><use href="#t-mach2"/></svg></span>
      </div>
      <div class="d-flex align-items-center">
        <span class="icon-cell d-flex align-items-center justify-content-center"><svg width="18" height="18"><use href="#t-mach3"/></svg></span>
        <span class="icon-cell d-flex align-items-center justify-content-center"><svg width="18" height="18"><use href="#t-datum"/></svg></span>
      </div>
    </div>
    <div class="rlabel d-flex align-items-center"><b>加工...</b><i class="caret-d"></i></div>
  </div>

  <div class="rgrp g-h d-flex flex-column">
    <div class="rbody d-flex flex-column icon-rows pad-d">
      <div class="d-flex align-items-center">
        <span class="icon-cell d-flex align-items-center justify-content-center"><svg width="18" height="18"><use href="#t-tri"/></svg></span>
        <span class="icon-cell d-flex align-items-center justify-content-center"><svg width="18" height="18"><use href="#t-table"/></svg></span>
        <span class="icon-cell d-flex align-items-center justify-content-center"><svg width="18" height="18"><use href="#t-f1"/></svg></span>
        <span class="icon-cell d-flex align-items-center justify-content-center"><svg width="18" height="18"><use href="#t-f2"/></svg></span>
      </div>
      <div class="d-flex align-items-center">
        <span class="icon-cell d-flex align-items-center justify-content-center"><svg width="18" height="18"><use href="#t-sheet"/></svg></span>
        <span class="icon-cell d-flex align-items-center justify-content-center"><svg width="18" height="18"><use href="#t-broom"/></svg></span>
        <span class="icon-sep"></span>
        <span class="icon-cell d-flex align-items-center justify-content-center"><svg width="20" height="22" viewBox="0 0 20 22"><use href="#t-binoc" width="18" height="10" x="1" y="0"/><text x="10" y="20" text-anchor="middle" font-size="8" font-weight="700" font-family="Liberation Sans" fill="#222">10H7</text></svg></span>
        <span class="icon-cell d-flex align-items-center justify-content-center ms-2"><svg width="18" height="18"><use href="#t-boxp"/></svg></span>
      </div>
    </div>
    <div class="rlabel d-flex align-items-center"><b>建模工具 - GC工...</b><i class="caret-d"></i></div>
  </div>

  <div class="rgrp g-i d-flex flex-column">
    <div class="rbody d-flex flex-column icon-rows align-items-center">
      <span class="icon-cell d-flex align-items-center justify-content-center"><svg width="18" height="18"><use href="#t-gold"/></svg></span>
      <span class="icon-cell d-flex align-items-center justify-content-center"><svg width="18" height="18"><use href="#t-gold"/></svg></span>
    </div>
    <div class="rlabel d-flex align-items-center"><b>?..</b><i class="caret-d"></i></div>
  </div>

  <div class="rgrp g-j d-flex flex-column">
    <div class="rbody d-flex flex-column icon-rows pad-e">
      <div class="d-flex align-items-center">
        <span class="icon-cell d-flex align-items-center justify-content-center"><svg width="18" height="18"><use href="#t-step"/></svg></span>
        <span class="icon-sep"></span>
        <span class="icon-cell d-flex align-items-center justify-content-center"><svg width="14" height="14" viewBox="0 0 14 14"><path d="M3 3l8 8M11 3l-8 8" stroke="#111" stroke-width="1.300"/></svg></span>
        <span class="icon-cell d-flex align-items-center justify-content-center"><svg width="22" height="18" viewBox="0 0 22 18"><text x="11" y="8" text-anchor="middle" font-size="8" font-weight="700" font-family="Liberation Sans" fill="#222">1.00</text><text x="11" y="16" text-anchor="middle" font-size="7" font-weight="700" font-family="Liberation Sans" fill="#444">±.05</text></svg></span>
        <span class="icon-cell d-flex align-items-center justify-content-center"><svg width="22" height="18" viewBox="0 0 22 18"><text x="11" y="8" text-anchor="middle" font-size="8" font-weight="700" font-family="Liberation Sans" fill="#222">1.00</text><text x="11" y="13" text-anchor="middle" font-size="5.500" font-family="Liberation Sans" fill="#333">+.00</text><text x="11" y="18" text-anchor="middle" font-size="5.500" font-family="Liberation Sans" fill="#8a2a2a">-.02</text></svg></span>
        <span class="icon-cell d-flex align-items-center justify-content-center"><svg width="22" height="18" viewBox="0 0 22 18"><text x="11" y="8" text-anchor="middle" font-size="8" font-weight="700" font-family="Liberation Sans" fill="#222">1.00</text><text x="11" y="13" text-anchor="middle" font-size="5.500" font-family="Liberation Sans" fill="#8a2a2a">+.00</text><text x="11" y="18" text-anchor="middle" font-size="5.500" font-family="Liberation Sans" fill="#333">-.00</text></svg></span>
        <span class="icon-cell d-flex align-items-center justify-content-center"><svg width="22" height="18" viewBox="0 0 22 18"><text x="11" y="8" text-anchor="middle" font-size="8" font-weight="700" font-family="Liberation Sans" fill="#222">1.00</text><text x="11" y="13" text-anchor="middle" font-size="5.500" font-family="Liberation Sans" fill="#333">+.00</text><text x="11" y="18" text-anchor="middle" font-size="5.500" font-family="Liberation Sans" fill="#8a2a2a">-.02</text></svg></span>
        <span class="icon-cell d-flex align-items-center justify-content-center"><svg width="17" height="14" viewBox="0 0 17 14"><rect x=".7" y=".7" width="15.600" height="12.600" fill="#fff" stroke="#7a2020" stroke-width="1.200"/><path d="M5 3l7 8M12 3l-7 8" stroke="#111"/></svg></span>
        <span class="icon-cell d-flex align-items-center justify-content-center"><svg width="17" height="15" viewBox="0 0 17 15"><path d="M3 1C1 4 1 11 3 14M14 1c2 3 2 10 0 13" fill="none" stroke="#7a2020"/><path d="M5 3l7 9M12 3l-7 9" stroke="#111"/></svg></span>
        <span class="icon-cell d-flex align-items-center justify-content-center"><svg width="22" height="12" viewBox="0 0 22 12"><text x="11" y="9" text-anchor="middle" font-size="8" font-weight="700" font-family="Liberation Sans" fill="#1a2a9a">10H7</text></svg></span>
        <span class="icon-cell d-flex align-items-center justify-content-center"><svg width="23" height="18" viewBox="0 0 23 18"><text x="11.500" y="7" text-anchor="middle" font-size="7" font-weight="700" font-family="Liberation Sans" fill="#1a2a9a">10H7</text><text x="11.500" y="15" text-anchor="middle" font-size="6" font-family="Liberation Sans" fill="#1a2a9a">[8⁰⁰¹]</text></svg></span>
        <span class="icon-cell d-flex align-items-center justify-content-center"><svg width="23" height="18" viewBox="0 0 23 18"><text x="11.500" y="7" text-anchor="middle" font-size="7" font-weight="700" font-family="Liberation Sans" fill="#1a2a9a">10H7</text><text x="11.500" y="15" text-anchor="middle" font-size="6" font-family="Liberation Sans" fill="#1a2a9a">[8⁰¹⁵]</text></svg></span>
        <span class="icon-cell d-flex align-items-center justify-content-center"><svg width="23" height="18" viewBox="0 0 23 18"><text x="11.500" y="7" text-anchor="middle" font-size="7" font-weight="700" font-family="Liberation Sans" fill="#1a2a9a">10</text><text x="11.500" y="15" text-anchor="middle" font-size="6" font-family="Liberation Sans" fill="#1a2a9a">[8⁰¹⁵]</text></svg></span>
      </div>
      <div class="d-flex align-items-center">
        <span class="icon-cell d-flex align-items-center justify-content-center"><svg width="20" height="18" viewBox="0 0 20 18"><use href="#t-lead1" width="18" height="18"/><text x="12" y="9" text-anchor="middle" font-size="6.500" font-weight="700" font-family="Liberation Mono" fill="#a22">R[Ø]</text></svg></span>
        <span class="icon-cell d-flex align-items-center justify-content-center"><svg width="20" height="18" viewBox="0 0 20 18"><use href="#t-lead2" width="18" height="18"/><text x="11" y="8" text-anchor="middle" font-size="6" font-weight="700" font-family="Liberation Mono" fill="#a22">R/Ø</text></svg></span>
        <span class="icon-sep"></span>
        <span class="icon-cell d-flex align-items-center justify-content-center ms-1"><svg width="18" height="18"><use href="#t-dia1"/></svg></span>
        <span class="icon-cell d-flex align-items-center justify-content-center"><svg width="18" height="18"><use href="#t-dia1"/></svg></span>
        <span class="icon-cell d-flex align-items-center justify-content-center"><svg width="18" height="18"><use href="#t-rot"/></svg></span>
      </div>
    </div>
    <div class="rlabel d-flex align-items-center"><b>尺寸快速格式化工具 - GC工具箱</b><i class="caret-d"></i></div>
  </div>

  <div class="rgrp g-k d-flex flex-column">
    <div class="rbody"></div>
    <div class="rlabel d-flex align-items-center justify-content-end"><i class="caret-d"></i></div>
  </div>
</section>

<main class="work-area d-flex">
  <nav class="side-rail d-flex flex-column align-items-center">
    <div class="rail-a d-flex align-items-center justify-content-center"><svg width="15" height="15"><use href="#r-gear"/></svg></div>
    <div class="rail-btn d-flex align-items-center justify-content-center w-100"><svg width="22" height="24"><use href="#r-blocks"/></svg></div>
    <div class="rail-btn on d-flex align-items-center justify-content-center"><svg width="26" height="26"><use href="#r-bracket"/></svg></div>
    <div class="rail-btn d-flex align-items-center justify-content-center w-100"><svg width="26" height="26"><use href="#r-bracket2"/></svg></div>
    <div class="rail-b d-flex align-items-center justify-content-center"><svg width="24" height="24"><use href="#r-globe"/></svg></div>
    <div class="rail-b d-flex align-items-center justify-content-center"><svg width="24" height="24"><use href="#r-clock"/></svg></div>
    <div class="rail-c d-flex align-items-center justify-content-center"><svg width="22" height="24"><use href="#r-color"/></svg></div>
    <div class="rail-d d-flex align-items-center justify-content-center"><svg width="24" height="24"><use href="#r-mill"/></svg></div>
    <div class="rail-e d-flex align-items-center justify-content-center"><svg width="24" height="24"><use href="#r-tools"/></svg></div>
  </nav>

  <aside class="nav-panel">
    <div class="panel-title d-flex align-items-center justify-content-between">
      <span>部件导航器</span>
      <svg width="12" height="12" viewBox="0 0 12 12"><path d="M.5 2.500h11v9H.5z" fill="#fff" stroke="#111"/><path d="M.5 1.500h11" stroke="#111" stroke-width="2"/></svg>
    </div>
    <div class="tree-box d-flex flex-column">
      <div class="tree-scroll-wrap">
        <table class="table tree-table">
          <colgroup><col class="c-name"><col><col><col></colgroup>
          <thead>
            <tr><th class="name-th"><span class="d-flex align-items-center">名称<i class="tree-head-sort"></i></span></th><th>当</th><th>最</th><th>附注</th></tr>
          </thead>
          <tbody id="treeBody">
            <tr><td><div class="tree-cell d-flex align-items-center"><svg width="15" height="20" viewBox="0 0 15 20"><path d="M7 10v10M7 10h8" stroke="#999" stroke-dasharray="1 1"/></svg><svg width="15" height="15"><use href="#n-clock"/></svg><span>历史记录建模模式</span></div></td><td></td><td></td><td></td></tr>
            <tr><td><div class="tree-cell d-flex align-items-center"><svg width="15" height="20" viewBox="0 0 15 20"><path d="M7 0v20M10 10h5" stroke="#999" stroke-dasharray="1 1"/><rect x="4" y="7" width="6" height="6" fill="#fff" stroke="#999"/><path d="M5 10h4M7 8v4" stroke="#111"/></svg><svg width="15" height="15"><use href="#n-view"/></svg><span>模型视图</span></div></td><td></td><td></td><td></td></tr>
            <tr><td><div class="tree-cell d-flex align-items-center"><svg width="15" height="20" viewBox="0 0 15 20"><path d="M7 0v20M10 10h5" stroke="#999" stroke-dasharray="1 1"/><rect x="4" y="7" width="6" height="6" fill="#fff" stroke="#999"/><path d="M5 10h4M7 8v4" stroke="#111"/></svg><svg width="15" height="15"><use href="#n-check"/></svg><svg width="15" height="15"><use href="#n-cam"/></svg><span>摄像机</span></div></td><td></td><td></td><td></td></tr>
            <tr><td><div class="tree-cell d-flex align-items-center"><svg width="15" height="20" viewBox="0 0 15 20"><path d="M7 0v7M10 10h5" stroke="#999" stroke-dasharray="1 1"/><rect x="4" y="7" width="6" height="6" fill="#fff" stroke="#999"/><path d="M5 10h4" stroke="#111"/></svg><svg width="15" height="15"><use href="#n-ball"/></svg><svg width="15" height="15"><use href="#n-group"/></svg><span>模型历史记录</span></div></td><td></td><td><svg class="mx-auto" width="15" height="15"><use href="#n-check"/></svg></td><td></td></tr>
            <tr><td><div class="tree-cell d-flex align-items-center"><svg width="34" height="20" viewBox="0 0 34 20"><path d="M26 0v10h8" stroke="#999" stroke-dasharray="1 1" fill="none"/></svg><svg width="15" height="12"><use href="#n-eye"/></svg><svg width="16" height="16"><use href="#t-datum"/></svg><b>基准坐标系 (0)</b></div></td><td><svg class="mx-auto" width="8" height="14"><use href="#n-dep"/></svg></td><td><svg class="mx-auto" width="15" height="15"><use href="#n-check"/></svg></td><td></td></tr>
          </tbody>
        </table>
      </div>
      <div class="h-scroll d-flex align-items-center">
        <span class="h-end d-flex align-items-center justify-content-center"><svg width="7" height="9" viewBox="0 0 7 9"><path d="M6 1L2 4.500 6 8" fill="none" stroke="#444" stroke-width="1.600"/></svg></span>
        <span class="h-thumb"></span>
        <span class="h-end ms-auto d-flex align-items-center justify-content-center"><svg width="7" height="9" viewBox="0 0 7 9"><path d="M1 1l4 3.500L1 8" fill="none" stroke="#444" stroke-width="1.600"/></svg></span>
      </div>
    </div>
    <div class="split-bar"></div>
    <div class="fold-row d-flex align-items-center"><i class="fold-tri"></i><span>搜索</span></div>
    <div class="fold-row d-flex align-items-center"><i class="fold-tri"></i><span>相关性</span></div>
    <div class="fold-row d-flex align-items-center"><i class="fold-tri"></i><span>细节</span></div>
    <div class="fold-row d-flex align-items-center"><i class="fold-tri"></i><span>预览</span></div>
  </aside>

  <section class="view-col d-flex flex-column">
    <div class="doc-tabs d-flex">
      <div class="doc-tab doc-home d-flex align-items-center"><svg width="17" height="16"><use href="#d-find"/></svg><span>发现中心</span></div>
      <div class="doc-tab doc-model d-flex align-items-center"><svg width="17" height="16"><use href="#d-part"/></svg><span>_model1.prt</span><svg class="ms-1" width="11" height="12" viewBox="0 0 11 12"><path d="M1 1h6l3 3v7H1z" fill="none" stroke="#fff" stroke-width="1.500"/><path d="M5 7l4-4" stroke="#fff" stroke-width="1.500"/></svg><svg width="9" height="9" viewBox="0 0 9 9"><path d="M1 1l7 7M8 1L1 8" stroke="#fff" stroke-width="2"/></svg></div>
    </div>
    <div class="teal-rule"></div>
    <div class="scene-wrap flex-grow-1">
      <svg id="scene" width="969" height="525" viewBox="358 174 969 525" xmlns="http://www.w3.org/2000/svg">
        <g id="dotsWhite"></g>
        <polygon points="842,173 918,173 918,524 842,437" fill="#000"/>
        <g id="dotsBlack"></g>
        <g fill="none" stroke="#1a1a9c">
          <path d="M846 422L895 381M846 424L887 471L886 486"/>
          <path d="M845 408V436M834 436H848" stroke-width="2"/>
        </g>
        <g fill="none" stroke="#6a72c8"><path d="M918 373L938 357M918 413L936 444L918 460"/></g>
        <polygon points="934,361 946,352 938,366" fill="#1414c0"/>
        <polygon points="917,521 928,535 922,535 916,527" fill="#1414c0"/>
        <polygon points="843,414 850,410 848,402 843,401" fill="#1414c0"/>
        <text x="945" y="351" font-size="10" fill="#5a64c0" font-family="Liberation Sans">Y</text>
        <text x="929" y="545" font-size="10" fill="#3a44b0" font-family="Liberation Sans">X</text>
        <text x="842" y="410" font-size="9" font-weight="700" fill="#2020b0" font-family="Liberation Sans">Z</text>
        <!-- triad -->
        <g fill="#fff" fill-opacity=".6" stroke="#ccc"><polygon points="435,597 455,620 432,640 412,618"/><path d="M412 618v5l20 22v-5M432 640v5l23-20v-5" fill="none"/></g>
        <polygon points="434,604 438,604 436,609 439,614 435,619 431,614" fill="#1440b8"/>
        <path d="M446 610L466 592" stroke="#4e9a3c" stroke-width="3.500"/><polygon points="463,590 472,589 467,597" fill="#3e9a34"/>
        <path d="M443 632L462 656" stroke="#cf5550" stroke-width="3.500"/><polygon points="458,655 466,659 465,650" fill="#d24a40"/>
        <text x="476" y="587" font-size="10" fill="#7aa06a" font-family="Liberation Sans">Y</text>
        <text x="468" y="670" font-size="10" fill="#c8704a" font-family="Liberation Sans">X</text>
      </svg>
      <div class="activate">
        <div class="activate-a">激活 Windows</div>
        <div class="activate-b">转到“设置”以激活 Windows。</div>
      </div>
    </div>
  </section>

  <div class="right-strip d-flex flex-column">
    <svg class="strip-cube" width="24" height="26" viewBox="0 0 24 26"><use href="#s-cube"/></svg>
    <div class="strip-rect"></div>
    <i class="strip-tri"></i>
  </div>
</main>

<footer class="foot-bar d-flex align-items-center justify-content-end">UG爱好者论坛@whl1989*</footer>

<script>
  // tree: fill the empty rows
  const treeBody = document.getElementById("treeBody");
  for (let i = 0; i < 14; i++) {
    const tr = document.createElement("tr");
    tr.innerHTML = "<td></td><td></td><td></td><td></td>";
    treeBody.appendChild(tr);
  }
  document.querySelectorAll(".tree-table col").forEach((c, i) => {
    c.style.width = [199, 24, 24, 59][i] + "px";
  });

  // viewport noise dots
  let seed = 20231;
  function rnd() {
    seed = (seed * 16807) % 2147483647;
    return seed / 2147483647;
  }
  const NS = "http://www.w3.org/2000/svg";
  const whiteDots = document.getElementById("dotsWhite");
  const blackDots = document.getElementById("dotsBlack");
  function inBlack(x, y) {
    return x > 842 && x < 918 && y < 437 + (x - 842) * 1.13;
  }
  function dot(x, y, w, h, c, onBlackColor) {
    const r = document.createElementNS(NS, "rect");
    const black = inBlack(x, y);
    if (black && !onBlackColor) return;
    r.setAttribute("x", x);
    r.setAttribute("y", y);
    r.setAttribute("width", w);
    r.setAttribute("height", h);
    r.setAttribute("fill", black ? onBlackColor : c);
    (black ? blackDots : whiteDots).appendChild(r);
  }
  function darkCol(x, y, n) {
    for (let i = 0; i < n; i++) {
      const px = x + (rnd() < .5 ? 0 : 2), py = y + i * 8;
      dot(px, py, 2, 2, i % 2 ? "#8a1f36" : "#2a1018", "#b04a5a");
      dot(px + 2, py + 3, 1, 2, "#8a5aa0", "#e0c8e0");
    }
  }
  function yellowBlock(x, y, cols, rows) {
    for (let c = 0; c < cols; c++) {
      for (let r = 0; r < rows; r++) {
        dot(x + c * 9, y + r * 9, 3, 2, "#f5ee78", "#9a62b4");
        if (rnd() < .5) dot(x + c * 9 + 2, y + r * 9 + 3, 1, 1, "#d08ad8", "#a060b0");
      }
    }
  }
  for (let gy = 170; gy < 700; gy += 26) {
    for (let gx = 358; gx < 1326; gx += 30) {
      const x = gx + Math.floor(rnd() * 24), y = gy + Math.floor(rnd() * 18);
      const k = rnd();
      if (k < .3) {
        darkCol(x, y, 2 + Math.floor(rnd() * 4));
      } else if (k < .55) {
        yellowBlock(x, y, 2 + Math.floor(rnd() * 2), 2 + Math.floor(rnd() * 2));
      } else if (k < .72) {
        darkCol(x, y, 3);
        yellowBlock(x + 8, y, 2, 2);
      }
    }
  }
</script>
</body>
</html>
